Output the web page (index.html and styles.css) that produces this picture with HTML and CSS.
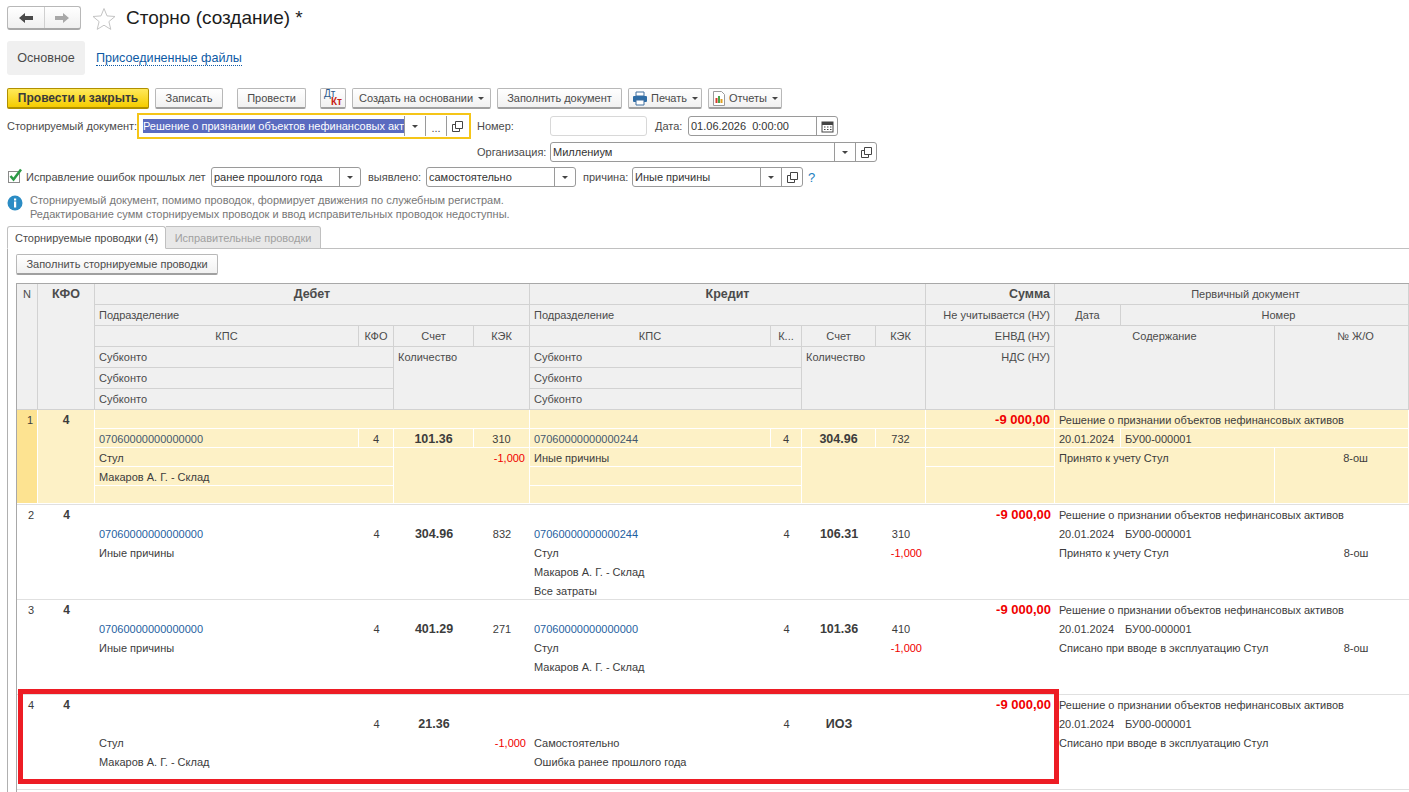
FILE: index.html
```html
<!DOCTYPE html>
<html>
<head>
  <meta charset="UTF-8">
  <title>Сторно (создание)</title>
  <link rel="stylesheet" href="styles.css">
</head>
<body>
  <div class="title-bar">
    <div class="nav-buttons">
      <div class="nav-btn">
        <svg width="16" height="12" viewBox="0 0 16 12"><path d="M1 6l6-5v3h8v4H7v3z" fill="#4a4a4a"/></svg>
      </div>
      <div class="nav-btn">
        <svg width="16" height="12" viewBox="0 0 16 12"><path d="M15 6L9 1v3H1v4h8v3z" fill="#a8a8a8"/></svg>
      </div>
    </div>
    <svg class="star" width="24" height="23" viewBox="0 0 24 23"><path d="M12 1.500l3 7.400 8 .6-6.100 5.100 1.900 7.800L12 18.200 5.200 22.400l1.900-7.800L1 9.500l8-.6z" fill="#fff" stroke="#c4c4c4"/></svg>
    <h1>Сторно (создание) *</h1>
  </div>

  <div class="page-tabs">
    <div class="page-tab active">Основное</div>
    <a class="page-tab-link">Присоединенные файлы</a>
  </div>

  <div class="toolbar">
    <button class="btn btn-main">Провести и закрыть</button>
    <button class="btn btn-save">Записать</button>
    <button class="btn btn-post">Провести</button>
    <button class="btn btn-dtkt"><span class="dt">Дт</span><span class="kt">Кт</span></button>
    <button class="btn btn-base">Создать на основании <i class="caret"></i></button>
    <button class="btn btn-doc">Заполнить документ</button>
    <button class="btn btn-icon">
      <svg width="16" height="15" viewBox="0 0 16 15"><path d="M4 1h8v4H4z" fill="#fff" stroke="#3f6f9f"/><rect x="1" y="5" width="14" height="6" rx="1" fill="#2f6da6"/><path d="M4 9h8v5H4z" fill="#fff" stroke="#3f6f9f"/></svg>
      Печать <i class="caret"></i>
    </button>
    <button class="btn btn-icon">
      <svg width="14" height="15" viewBox="0 0 14 15"><path d="M1.500.5h8l3 3v11h-11z" fill="#fff" stroke="#9a9a9a"/><rect x="3.500" y="7" width="2" height="5" fill="#d8392b"/><rect x="6" y="5" width="2" height="7" fill="#4aa34a"/><rect x="8.500" y="8" width="2" height="4" fill="#e0a020"/></svg>
      Отчеты <i class="caret"></i>
    </button>
  </div>

  <div class="form-row doc-row">
    <label class="doc-label">Сторнируемый документ:</label>
    <div class="focus-box">
      <span class="selected">Решение о признании объектов нефинансовых акт</span>
      <span class="fbtn"><i class="caret"></i></span>
      <span class="fbtn dots">...</span>
      <span class="fbtn"><svg width="11" height="11" viewBox="0 0 11 11"><path d="M3.500.5h7v7h-7zM3.500 3.500H.5v7h7V7.500" fill="none" stroke="#444"/></svg></span>
    </div>
    <label class="num-label">Номер:</label>
    <div class="field field-disabled num-field"></div>
    <label class="date-label">Дата:</label>
    <div class="field date-field">
      <span class="val">01.06.2026  0:00:00</span>
      <span class="fbtn">
        <svg width="13" height="13" viewBox="0 0 13 13"><rect x="1" y="2" width="11" height="10" fill="#fff" stroke="#444"/><rect x="1" y="2" width="11" height="3" fill="#444"/><path d="M3 7h1.500M6 7h1.500M9 7h1.500M3 9.500h1.500M6 9.500h1.500M9 9.500h1.500" stroke="#444"/></svg>
      </span>
    </div>
  </div>

  <div class="form-row org-row">
    <label class="org-label">Организация:</label>
    <div class="field org-field">
      <span class="val">Миллениум</span>
      <span class="fbtn"><i class="caret"></i></span>
      <span class="fbtn"><svg width="11" height="11" viewBox="0 0 11 11"><path d="M3.500.5h7v7h-7zM3.500 3.500H.5v7h7V7.500" fill="none" stroke="#444"/></svg></span>
    </div>
  </div>

  <div class="form-row fix-row">
    <svg class="check" width="16" height="16" viewBox="0 0 16 16"><rect x="1.500" y="3.500" width="11" height="11" fill="#fff" stroke="#8a8a8a"/><path d="M3.500 8l3 3.500L14 1.500" fill="none" stroke="#2c9a46" stroke-width="2.500"/></svg>
    <label class="fix-label">Исправление ошибок прошлых лет</label>
    <div class="field period-field">
      <span class="val">ранее прошлого года</span>
      <span class="fbtn"><i class="caret"></i></span>
    </div>
    <label class="found-label">выявлено:</label>
    <div class="field found-field">
      <span class="val">самостоятельно</span>
      <span class="fbtn"><i class="caret"></i></span>
    </div>
    <label class="reason-label">причина:</label>
    <div class="field reason-field">
      <span class="val">Иные причины</span>
      <span class="fbtn"><i class="caret"></i></span>
      <span class="fbtn"><svg width="11" height="11" viewBox="0 0 11 11"><path d="M3.500.5h7v7h-7zM3.500 3.500H.5v7h7V7.500" fill="none" stroke="#444"/></svg></span>
    </div>
    <a class="help">?</a>
  </div>

  <div class="info">
    <svg width="16" height="16" viewBox="0 0 16 16"><circle cx="8" cy="8" r="7.500" fill="#2b8cc4"/><rect x="7" y="6.500" width="2.200" height="6" fill="#fff"/><rect x="7" y="3.500" width="2.200" height="2" fill="#fff"/></svg>
    <p>Сторнируемый документ, помимо проводок, формирует движения по служебным регистрам.<br>Редактирование сумм сторнируемых проводок и ввод исправительных проводок недоступны.</p>
  </div>

  <div class="tabs">
    <div class="tab active">Сторнируемые проводки (4)</div>
    <div class="tab">Исправительные проводки</div>
  </div>

  <div class="panel">
    <button class="btn btn-fill">Заполнить сторнируемые проводки</button>

    <div class="table">
      <div class="thead">
        <div class="c r6 mid">N</div>
        <div class="c r6 mid b">КФО</div>
        <div class="c s4 mid b">Дебет</div>
        <div class="c s4 mid b">Кредит</div>
        <div class="c right b">Сумма</div>
        <div class="c s3 mid edge">Первичный документ</div>

        <div class="c s4">Подразделение</div>
        <div class="c s4">Подразделение</div>
        <div class="c right">Не учитывается (НУ)</div>
        <div class="c mid">Дата</div>
        <div class="c s2 mid edge">Номер</div>

        <div class="c mid">КПС</div>
        <div class="c mid">КФО</div>
        <div class="c mid">Счет</div>
        <div class="c mid">КЭК</div>
        <div class="c mid">КПС</div>
        <div class="c mid">К...</div>
        <div class="c mid">Счет</div>
        <div class="c mid">КЭК</div>
        <div class="c right">ЕНВД (НУ)</div>
        <div class="c s2 r4 mid">Содержание</div>
        <div class="c r4 mid edge">№ Ж/О</div>

        <div class="c s2">Субконто</div>
        <div class="c s2 r3">Количество</div>
        <div class="c s2">Субконто</div>
        <div class="c s2 r3">Количество</div>
        <div class="c r3 right">НДС (НУ)</div>

        <div class="c s2">Субконто</div>
        <div class="c s2">Субконто</div>
        <div class="c s2">Субконто</div>
        <div class="c s2">Субконто</div>
      </div>

      <div class="row current">
        <div class="c r5 num">1</div>
        <div class="c r5 mid b">4</div>
        <div class="c s4"></div>
        <div class="c s4"></div>
        <div class="c right sum">-9 000,00</div>
        <div class="c s3">Решение о признании объектов нефинансовых активов</div>

        <div class="c code">07060000000000000</div>
        <div class="c mid">4</div>
        <div class="c mid b acc">101.36</div>
        <div class="c mid">310</div>
        <div class="c code">07060000000000244</div>
        <div class="c mid">4</div>
        <div class="c mid b acc">304.96</div>
        <div class="c mid">732</div>
        <div class="c"></div>
        <div class="c">20.01.2024</div>
        <div class="c s2">БУ00-000001</div>

        <div class="c s2">Стул</div>
        <div class="c s2 r3 right qty">-1,000</div>
        <div class="c s2">Иные причины</div>
        <div class="c s2 r3"></div>
        <div class="c"></div>
        <div class="c s2 r3">Принято к учету Стул</div>
        <div class="c r3 mid edge">8-ош</div>

        <div class="c s2">Макаров А. Г. - Склад</div>
        <div class="c s2"></div>
        <div class="c r2"></div>

        <div class="c s2"></div>
        <div class="c s2"></div>
      </div>

      <div class="row">
        <div class="c r5 num">2</div>
        <div class="c r5 mid b">4</div>
        <div class="c s4"></div>
        <div class="c s4"></div>
        <div class="c right sum">-9 000,00</div>
        <div class="c s3">Решение о признании объектов нефинансовых активов</div>

        <div class="c code">07060000000000000</div>
        <div class="c mid">4</div>
        <div class="c mid b acc">304.96</div>
        <div class="c mid">832</div>
        <div class="c code">07060000000000244</div>
        <div class="c mid">4</div>
        <div class="c mid b acc">106.31</div>
        <div class="c mid">310</div>
        <div class="c"></div>
        <div class="c">20.01.2024</div>
        <div class="c s2">БУ00-000001</div>

        <div class="c s2">Иные причины</div>
        <div class="c s2 r3"></div>
        <div class="c s2">Стул</div>
        <div class="c s2 r3 right qty">-1,000</div>
        <div class="c"></div>
        <div class="c s2 r3">Принято к учету Стул</div>
        <div class="c r3 mid edge">8-ош</div>

        <div class="c s2"></div>
        <div class="c s2">Макаров А. Г. - Склад</div>
        <div class="c r2"></div>

        <div class="c s2"></div>
        <div class="c s2">Все затраты</div>
      </div>

      <div class="row">
        <div class="c r5 num">3</div>
        <div class="c r5 mid b">4</div>
        <div class="c s4"></div>
        <div class="c s4"></div>
        <div class="c right sum">-9 000,00</div>
        <div class="c s3">Решение о признании объектов нефинансовых активов</div>

        <div class="c code">07060000000000000</div>
        <div class="c mid">4</div>
        <div class="c mid b acc">401.29</div>
        <div class="c mid">271</div>
        <div class="c code">07060000000000000</div>
        <div class="c mid">4</div>
        <div class="c mid b acc">101.36</div>
        <div class="c mid">410</div>
        <div class="c"></div>
        <div class="c">20.01.2024</div>
        <div class="c s2">БУ00-000001</div>

        <div class="c s2">Иные причины</div>
        <div class="c s2 r3"></div>
        <div class="c s2">Стул</div>
        <div class="c s2 r3 right qty">-1,000</div>
        <div class="c"></div>
        <div class="c s2 r3">Списано при вводе в эксплуатацию Стул</div>
        <div class="c r3 mid edge">8-ош</div>

        <div class="c s2"></div>
        <div class="c s2">Макаров А. Г. - Склад</div>
        <div class="c r2"></div>

        <div class="c s2"></div>
        <div class="c s2"></div>
      </div>

      <div class="row marked">
        <div class="c r5 num">4</div>
        <div class="c r5 mid b">4</div>
        <div class="c s4"></div>
        <div class="c s4"></div>
        <div class="c right sum">-9 000,00</div>
        <div class="c s3">Решение о признании объектов нефинансовых активов</div>

        <div class="c code"></div>
        <div class="c mid">4</div>
        <div class="c mid b acc">21.36</div>
        <div class="c mid"></div>
        <div class="c code"></div>
        <div class="c mid">4</div>
        <div class="c mid b acc">ИОЗ</div>
        <div class="c mid"></div>
        <div class="c"></div>
        <div class="c">20.01.2024</div>
        <div class="c s2">БУ00-000001</div>

        <div class="c s2">Стул</div>
        <div class="c s2 r3 right qty">-1,000</div>
        <div class="c s2">Самостоятельно</div>
        <div class="c s2 r3"></div>
        <div class="c"></div>
        <div class="c s2 r3">Списано при вводе в эксплуатацию Стул</div>
        <div class="c r3"></div>

        <div class="c s2">Макаров А. Г. - Склад</div>
        <div class="c s2">Ошибка ранее прошлого года</div>
        <div class="c r2"></div>

        <div class="c s2"></div>
        <div class="c s2"></div>
        <div class="red-frame"></div>
      </div>
    </div>
  </div>
</body>
</html>
```

FILE: styles.css
```css
* {
  box-sizing: border-box;
}

html, body {
  height: 100%;
}

body {
  margin: 0;
  overflow: hidden;
  background: #fff;
  color: #4b4b4b;
  font-family: "Liberation Sans", Arial, sans-serif;
  font-size: 11px;
}

label {
  white-space: nowrap;
}

/* title */
.title-bar {
  display: flex;
  align-items: center;
  height: 24px;
  margin: 6px 0 0 7px;
}

.nav-buttons {
  display: flex;
  width: 74px;
  height: 24px;
  border: 1px solid #b8b8b8;
  border-bottom: 2px solid #a8a8a8;
  border-radius: 3px;
  background: linear-gradient(#fff, #f0f0f0);
}

.nav-btn {
  display: flex;
  flex: 1;
  align-items: center;
  justify-content: center;
}

.nav-btn + .nav-btn {
  border-left: 1px solid #d0d0d0;
}

.star {
  margin-left: 11px;
}

h1 {
  margin: 0 0 0 10px;
  color: #1c1c1c;
  font-size: 19px;
  font-weight: normal;
  white-space: nowrap;
}

/* page tabs */
.page-tabs {
  display: flex;
  align-items: center;
  height: 34px;
  margin: 11px 0 0 7px;
}

.page-tab {
  display: flex;
  align-items: center;
  justify-content: center;
  width: 78px;
  height: 34px;
  border-radius: 3px;
  background: #f0f0f0;
  font-size: 12.600px;
}

.page-tab-link {
  margin: 1px 0 0 11px;
  border-bottom: 1px dotted #0e5aa5;
  color: #0e5aa5;
  font-size: 12.600px;
  line-height: 14px;
}

/* toolbar */
.toolbar {
  display: flex;
  height: 21px;
  margin: 13px 0 0 7px;
}

.btn {
  display: flex;
  align-items: center;
  justify-content: center;
  height: 21px;
  margin-right: 6px;
  padding: 0 4px;
  border: 1px solid #b8b8b8;
  border-bottom: 2px solid #a0a0a0;
  border-radius: 2px;
  background: linear-gradient(#fff, #f1f1f1);
  color: #4b4b4b;
  font-family: inherit;
  font-size: 11px;
  white-space: nowrap;
}

.btn-main {
  width: 142px;
  border-color: #b09000;
  background: linear-gradient(#ffe95a, #f5cc00);
  color: #3a3a3a;
  font-size: 12px;
  font-weight: bold;
}

.btn-save {
  width: 68px;
  margin-right: 14px;
}

.btn-post {
  width: 69px;
  margin-right: 14px;
}

.btn-dtkt {
  flex-direction: column;
  align-items: stretch;
  width: 26px;
  padding: 0 3px;
  font-size: 10px;
  line-height: 8px;
}

.dt {
  align-self: flex-start;
  color: #2c5a8c;
}

.kt {
  align-self: flex-end;
  color: #c81e14;
  font-weight: bold;
}

.btn-base {
  width: 139px;
}

.btn-doc {
  width: 125px;
}

.btn-icon {
  width: 74px;
}

.btn-icon svg {
  flex: none;
  margin-right: 3px;
}

.caret {
  display: inline-block;
  width: 0;
  height: 0;
  margin-left: 5px;
  border-top: 3px solid #444;
  border-left: 3.500px solid transparent;
  border-right: 3.500px solid transparent;
}

/* form */
.form-row {
  display: flex;
  align-items: center;
  white-space: nowrap;
}

.doc-row {
  height: 26px;
  margin: 4px 0 0 7px;
}

.doc-label {
  width: 130px;
}

.focus-box {
  display: flex;
  align-items: center;
  width: 334px;
  height: 26px;
  padding: 0 1px 0 4px;
  border: 2px solid #f5c518;
  background: #fff;
}

.selected {
  width: 261px;
  overflow: hidden;
  background: #5a6bc0;
  color: #fff;
  line-height: 14px;
}

.fbtn {
  display: flex;
  flex: none;
  align-items: center;
  justify-content: center;
  width: 21px;
  height: 100%;
  border-left: 1px solid #9a9a9a;
}

.focus-box .fbtn {
  height: 20px;
}

.fbtn .caret {
  margin-left: 0;
}

.dots {
  padding-top: 4px;
}

.field {
  display: flex;
  align-items: stretch;
  height: 20px;
  border: 1px solid #9a9a9a;
  border-radius: 3px;
  background: #fff;
  color: #333;
  line-height: 18px;
}

.field-disabled {
  border-color: #d8d8d8;
}

.val {
  flex: 1;
  overflow: hidden;
  padding-left: 2px;
  white-space: pre;
}

.num-label {
  margin-left: 6px;
  width: 73px;
}

.num-field {
  width: 97px;
}

.date-label {
  margin-left: 8px;
  width: 33px;
}

.date-field {
  width: 150px;
}

.org-row {
  height: 20px;
  margin: 3px 0 0 477px;
}

.org-label {
  width: 73px;
}

.org-field {
  width: 327px;
}

.fix-row {
  height: 20px;
  margin: 5px 0 0 7px;
}

.check {
  flex: none;
  margin-top: -3px;
}

.fix-label {
  width: 185px;
  margin-left: 3px;
}

.period-field {
  width: 150px;
}

.found-label {
  width: 58px;
  margin-left: 7px;
}

.found-field {
  width: 150px;
}

.reason-label {
  width: 49px;
  margin-left: 7px;
}

.reason-field {
  width: 171px;
}

.help {
  margin-left: 5px;
  color: #2280c0;
  font-size: 13px;
}

.info {
  display: flex;
  margin: 6px 0 0 7px;
}

.info svg {
  flex: none;
  margin-top: 2px;
}

.info p {
  margin: 0 0 0 7px;
  color: #777;
  font-size: 11px;
  line-height: 14px;
}

/* tabs and table */
.tabs {
  display: flex;
  height: 23px;
  margin: 5px 0 0 7px;
}

.tab {
  display: flex;
  align-items: center;
  justify-content: center;
  width: 155px;
  height: 23px;
  border: 1px solid #c0c0c0;
  border-left: none;
  border-radius: 0 3px 0 0;
  background: #e8e8e8;
  color: #a0a0a0;
}

.tab.active {
  position: relative;
  z-index: 1;
  width: 159px;
  border-left: 1px solid #c0c0c0;
  border-bottom-color: #fff;
  border-radius: 3px 3px 0 0;
  background: #fff;
  color: #4b4b4b;
}

.panel {
  height: 544px;
  margin: -1px 0 0 7px;
  padding: 5px 0 0 8px;
  border-top: 1px solid #c0c0c0;
  border-left: 1px solid #b0b0b0;
}

.btn-fill {
  width: 202px;
  margin: 0;
}

.table {
  width: 1393px;
  height: 520px;
  margin-top: 8px;
  border-top: 1px solid #a8a8a8;
  border-left: 1px solid #a8a8a8;
}

.thead, .row {
  display: grid;
  grid-template-columns: 21px 57px 264px 35px 80px 56px 241px 31px 74px 50px 129px 66px 154px 134px;
}

.thead {
  grid-template-rows: repeat(6, 21px);
  background: #f0f0f0;
}

.row {
  position: relative;
  grid-template-rows: 19px 19px 19px 19px 18px;
  border-bottom: 1px solid #e0e0e0;
}

.c {
  overflow: hidden;
  padding: 0 4px;
  line-height: 20px;
  white-space: nowrap;
}

.thead .c {
  border-right: 1px solid #d2d2d2;
  border-bottom: 1px solid #d2d2d2;
}

.thead .b {
  font-size: 12.500px;
}

.row .c {
  color: #3c3c3c;
}

.row .b {
  font-size: 12px;
}

.row.current {
  background: #fdf1c6;
}

.row.current .c {
  border-right: 1px solid #fff;
  border-bottom: 1px solid #fff;
}

.row.current .num {
  background: #fde391;
}

.s2 { grid-column: span 2; }
.s3 { grid-column: span 3; }
.s4 { grid-column: span 4; }
.r2 { grid-row: span 2; }
.r3 { grid-row: span 3; }
.r4 { grid-row: span 4; }
.r5 { grid-row: span 5; }
.r6 { grid-row: span 6; }

.mid {
  text-align: center;
}

.right {
  text-align: right;
}

.b {
  font-weight: bold;
}

/* the last column goes on past the window, centred text sits further right */
.edge {
  padding-left: 32px;
}

.row .acc {
  font-size: 12.500px;
}

.row .num {
  text-align: right;
}

.row .sum {
  color: #f00000;
  font-size: 13px;
  font-weight: bold;
}

.row .qty {
  color: #f00000;
}

.row .code {
  color: #1f5f9f;
}

.row.current .code {
  color: #44586e;
}

.red-frame {
  position: absolute;
  top: -6px;
  left: 1px;
  width: 1041px;
  height: 95px;
  border: 5px solid #ed1c24;
}
```
